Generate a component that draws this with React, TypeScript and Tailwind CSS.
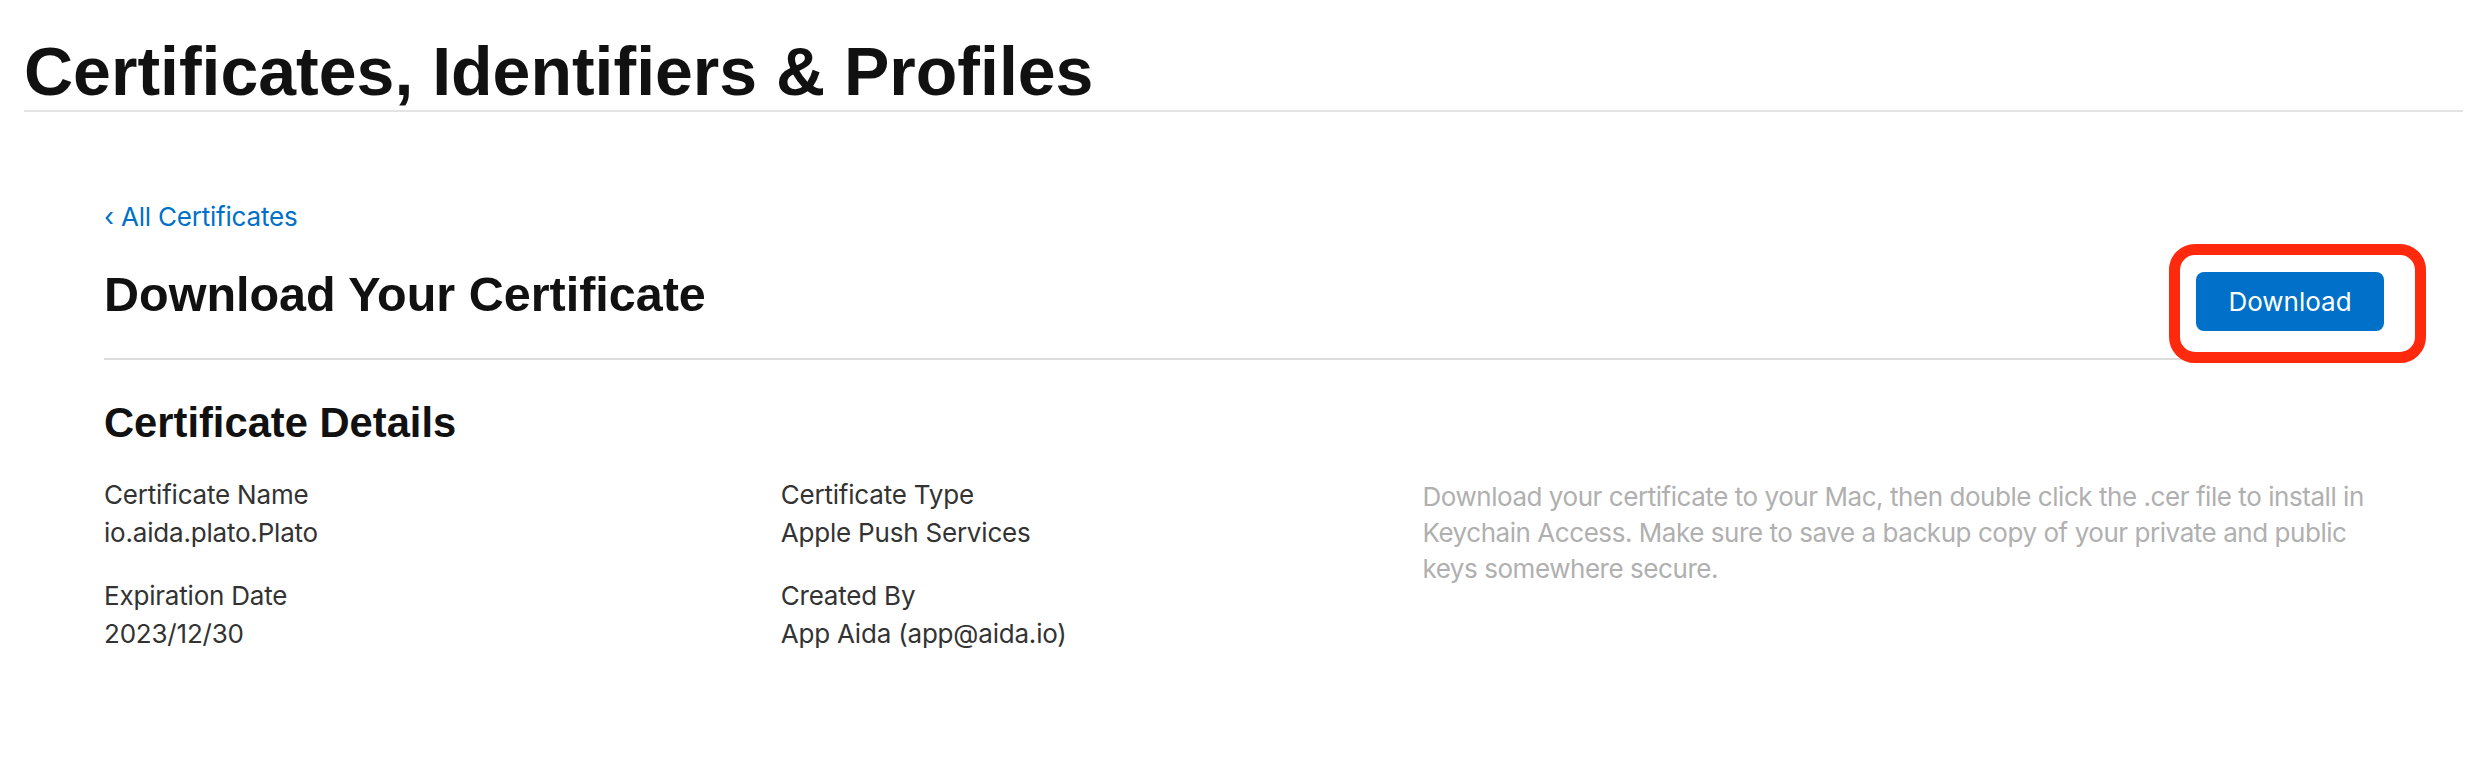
import React from "react";

const HEAD = { fontFamily: '"Liberation Sans", Arial, sans-serif' };
const BODY = { fontFamily: 'Inter, "Noto Sans", sans-serif' };

function Field({ label, value, className = "" }: { label: string; value: string; className?: string }) {
  return (
    <div className={className}>
      <div className="text-[26px] leading-[38px] tracking-[-0.2px] text-[#333333]">{label}</div>
      <div className="text-[26px] leading-[38px] tracking-[-0.2px] text-[#333333]">{value}</div>
    </div>
  );
}

export default function App() {
  return (
    <div className="w-[2468px] h-[778px] bg-white overflow-hidden" style={BODY}>
      <header className="pl-[24px] pr-[5px] pt-[37px]">
        <h1 className="text-[68px] leading-[68px] font-bold text-[#111111]" style={HEAD}>
          Certificates, Identifiers &amp; Profiles
        </h1>
        <div className="mt-[5px] h-[2px] bg-[#e3e3e3]" />
      </header>

      <main className="pl-[104px] pr-[84px]">
        <a className="mt-[86px] block text-[26px] leading-[38px] tracking-[-0.2px] text-[#0070c9]" href="#">
          ‹ All Certificates
        </a>

        <div className="mt-[34px] flex items-start justify-between">
          <h2 className="text-[48.5px] leading-[48px] font-bold text-[#111111]" style={HEAD}>
            Download Your Certificate
          </h2>
          <div className="relative mt-[2px]">
            <button className="w-[188px] h-[59px] rounded-[8px] bg-[#0070c9] text-white text-[26px] leading-[59px]">
              Download
            </button>
            <div className="pointer-events-none absolute left-[-27px] right-[-42px] top-[-28px] bottom-[-32px] rounded-[26px] border-[11px] border-[#ff2a0d]" />
          </div>
        </div>

        <div className="mt-[27px] h-[2px] bg-[#dcdcdc]" />

        <h3 className="mt-[42px] text-[41.7px] leading-[41px] font-bold text-[#111111]" style={HEAD}>
          Certificate Details
        </h3>

        <div className="mt-[33px] flex">
          <div className="w-[677px] flex flex-col gap-[25px]">
            <Field label="Certificate Name" value="io.aida.plato.Plato" />
            <Field label="Expiration Date" value="2023/12/30" />
          </div>
          <div className="w-[642px] flex flex-col gap-[25px]">
            <Field label="Certificate Type" value="Apple Push Services" />
            <Field label="Created By" value="App Aida (app@aida.io)" />
          </div>
          <p className="mt-[3px] w-[962px] text-[26px] leading-[36px] tracking-[-0.45px] text-[#b0b0b0]">
            Download your certificate to your Mac, then double click the .cer file to install in Keychain Access.
            Make sure to save a backup copy of your private and public keys somewhere secure.
          </p>
        </div>
      </main>
    </div>
  );
}
